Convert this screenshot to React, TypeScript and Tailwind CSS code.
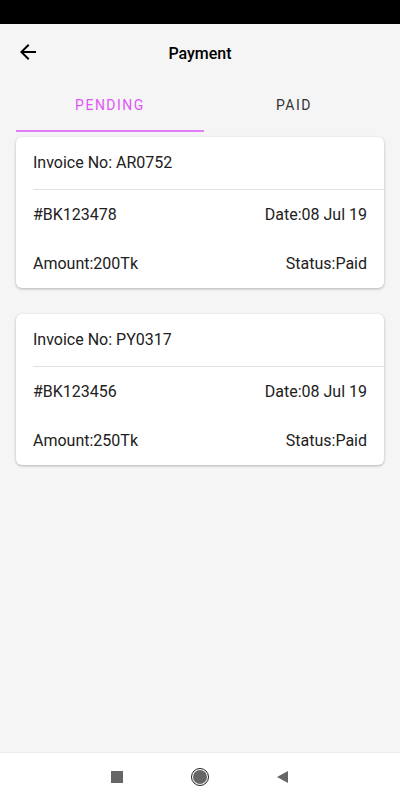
import React from "react";

const invoices = [
  { no: "AR0752", ref: "#BK123478", date: "08 Jul 19", amount: "200Tk", status: "Paid" },
  { no: "PY0317", ref: "#BK123456", date: "08 Jul 19", amount: "250Tk", status: "Paid" },
];

function InvoiceCard({ inv }: { inv: (typeof invoices)[number] }) {
  return (
    <div className="bg-white rounded-md shadow-[0_1px_3px_rgba(0,0,0,0.28)] text-[16px] text-[#212121]">
      <div className="h-[52px] flex items-center pl-[17px]">Invoice No: {inv.no}</div>
      <div className="ml-[17px] h-px bg-[#e0e0e0]" />
      <div className="h-[49px] flex items-center justify-between px-[17px]">
        <span>{inv.ref}</span>
        <span>Date:{inv.date}</span>
      </div>
      <div className="h-[49px] flex items-center justify-between px-[17px]">
        <span>Amount:{inv.amount}</span>
        <span>Status:{inv.status}</span>
      </div>
    </div>
  );
}

export default function App() {
  return (
    <div className="w-[400px] h-[800px] flex flex-col bg-[#f5f5f5] font-['Roboto',sans-serif] overflow-hidden">
      {/* Status bar */}
      <div className="h-6 bg-black shrink-0" />

      {/* Header */}
      <div className="h-[57px] flex items-center relative shrink-0">
        <button className="absolute left-4 top-[16px] w-6 h-6">
          <svg viewBox="0 0 24 24" className="w-6 h-6" fill="#000">
            <path d="M20 11H7.83l5.59-5.59L12 4l-8 8 8 8 1.41-1.41L7.83 13H20v-2z" />
          </svg>
        </button>
        <div className="flex-1 text-center text-[16px] font-medium text-black pt-[2px]">Payment</div>
      </div>

      {/* Tabs */}
      <div className="flex px-4 h-[51px] shrink-0">
        <div className="w-[188px] flex flex-col">
          <div className="flex-1 flex items-center justify-center text-[14px] tracking-[1.5px] text-[#e055f7]">PENDING</div>
          <div className="h-[2px] bg-[#e27cf8]" />
        </div>
        <div className="w-[180px] flex items-center justify-center text-[14px] tracking-[1.5px] text-[#333] pb-[2px]">PAID</div>
      </div>

      {/* List */}
      <div className="flex-1 flex flex-col gap-[26px] px-4 pt-[5px]">
        {invoices.map((inv) => (
          <InvoiceCard key={inv.no} inv={inv} />
        ))}
      </div>

      {/* Nav bar */}
      <div className="h-12 bg-white border-t border-[#ececec] flex items-center justify-center shrink-0">
        <div className="flex items-center gap-[68px] pr-[1px]">
          <div className="w-3 h-3 bg-[#666]" />
          <div className="w-[18px] h-[18px] rounded-full border border-[#222] flex items-center justify-center">
            <div className="w-[14px] h-[14px] rounded-full bg-[#666]" />
          </div>
          <svg viewBox="0 0 11 12" className="w-[11px] h-3">
            <polygon points="0,6 11,0 11,12" fill="#666" />
          </svg>
        </div>
      </div>
    </div>
  );
}
